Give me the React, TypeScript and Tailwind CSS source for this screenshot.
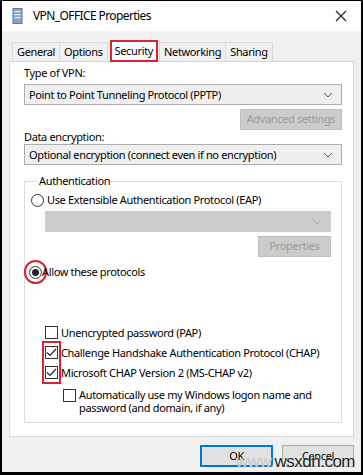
import React from 'react';

function Chevron({ muted = false }: { muted?: boolean }) {
  return (
    <svg width="10" height="6" viewBox="0 0 10 6" className="shrink-0">
      <path d="M1 1 L5 5 L9 1" fill="none" stroke={muted ? '#b0b0b0' : '#555'} strokeWidth="1" />
    </svg>
  );
}

function Select({ label, disabled = false }: { label?: string; disabled?: boolean }) {
  return (
    <div
      className={`flex h-[21px] items-center justify-between border pl-[4px] pr-[8px] ${
        disabled ? 'border-[#cccccc] bg-[#cccccc]' : 'border-[#adadad] bg-[#efefef]'
      }`}
    >
      <span className="whitespace-nowrap leading-[16px]">{label}</span>
      <Chevron muted={disabled} />
    </div>
  );
}

function DisabledButton({ children, width }: { children: React.ReactNode; width: string }) {
  return (
    <div className={`${width} flex h-[21px] items-center justify-center whitespace-nowrap border border-[#bfbfbf] bg-[#cccccc] text-[#9b9b9b]`}>
      {children}
    </div>
  );
}

function Radio({ checked = false }: { checked?: boolean }) {
  return (
    <span className="flex h-[13px] w-[13px] shrink-0 items-center justify-center rounded-full border border-[#333] bg-white">
      {checked ? <span className="h-[7px] w-[7px] rounded-full bg-[#222]" /> : null}
    </span>
  );
}

function Check({ checked = false }: { checked?: boolean }) {
  return (
    <span className="flex h-[13px] w-[13px] shrink-0 items-center justify-center border border-[#333] bg-white">
      {checked ? (
        <svg width="11" height="9" viewBox="0 0 11 9">
          <path d="M1 4.5 L4 7.5 L10 1" fill="none" stroke="#222" strokeWidth="1.2" />
        </svg>
      ) : null}
    </span>
  );
}

const tabs = ['General', 'Options', 'Security', 'Networking', 'Sharing'];

export default function App() {
  return (
    <div
      className="relative flex h-[475px] w-[363px] flex-col overflow-hidden border-x-2 border-b-[3px] border-t border-black bg-[#f0f0f0] text-[11px] tracking-[-0.35px] text-black"
      style={{ fontFamily: '"Noto Sans", "Open Sans", sans-serif' }}
    >
      {/* title bar */}
      <div className="flex h-[30px] items-center bg-white pl-[10px] pr-[10px]">
        <svg width="11" height="16" viewBox="0 0 11 16" className="mr-[10px]">
          <rect x="1" y="0.5" width="9" height="15" fill="#8aa6c4" stroke="#5d7da3" />
          <rect x="2.5" y="3" width="6" height="1.2" fill="#e8eef5" />
          <rect x="2.5" y="6" width="6" height="1.2" fill="#e8eef5" />
          <rect x="2.5" y="9" width="6" height="1.2" fill="#e8eef5" />
        </svg>
        <span className="text-[12px] leading-[18px] tracking-[-0.6px]">VPN_OFFICE Properties</span>
        <svg width="12" height="12" viewBox="0 0 12 12" className="ml-auto mr-[4px]">
          <path d="M1 1 L11 11 M11 1 L1 11" stroke="#222" strokeWidth="1.2" />
        </svg>
      </div>

      {/* tabs */}
      <div className="ml-[10px] mt-[8px] flex h-[22px] items-end">
        {tabs.map((t) =>
          t === 'Security' ? (
            <div
              key={t}
              className="relative z-10 -mb-px ml-[3px] mr-[1px] flex h-[22px] items-center border-2 border-[#d9232e] bg-white px-[3px] leading-[16px]"
            >
              {t}
            </div>
          ) : (
            <div
              key={t}
              className="-mr-px flex h-[19px] items-center border border-b-0 border-[#d9d9d9] bg-[#f0f0f0] px-[4px] leading-[16px]"
            >
              {t}
            </div>
          )
        )}
      </div>

      {/* panel */}
      <div className="mx-[7px] flex h-[376px] flex-col border border-[#d9d9d9] bg-white pl-[14px] pr-[11px] pt-[3px]">
        <div className="leading-[16px]">Type of VPN:</div>
        <div className="mt-[3px]">
          <Select label="Point to Point Tunneling Protocol (PPTP)" />
        </div>
        <div className="mt-[4px] flex justify-end">
          <DisabledButton width="w-[102px]">Advanced settings</DisabledButton>
        </div>
        <div className="leading-[14px]">Data encryption:</div>
        <Select label="Optional encryption (connect even if no encryption)" />

        <fieldset className="mt-[8px] h-[250px] border border-[#dcdcdc] pl-[6px] pr-[10px]">
          <legend className="ml-[7px] px-[1px] leading-[16px]">Authentication</legend>
          <div className="mt-[3px] flex items-center gap-[3px] leading-[16px]">
            <Radio />
            <span className="whitespace-nowrap">Use Extensible Authentication Protocol (EAP)</span>
          </div>
          <div className="ml-[14px] mt-[3px]">
            <Select disabled />
          </div>
          <div className="mt-[4px] flex justify-end">
            <DisabledButton width="w-[73px]">Properties</DisabledButton>
          </div>
          <div className="mt-[3px] flex items-center gap-[3px] leading-[16px]">
            <span className="-ml-[7px] flex h-[24px] w-[23px] items-center justify-center rounded-full border-2 border-[#d9232e]">
              <Radio checked />
            </span>
            <span className="-ml-[8px]">Allow these protocols</span>
          </div>

          <div className="ml-[14px] mt-[42px] flex flex-col gap-[7px]">
            <div className="flex items-center gap-[3px] leading-[13px]">
              <Check />
              <span>Unencrypted password (PAP)</span>
            </div>
            <div className="relative flex flex-col gap-[7px]">
              <span className="absolute -left-[3px] -top-[5px] h-[43px] w-[19px] border-2 border-[#d9232e]" />
              <div className="flex items-center gap-[3px] leading-[13px]">
                <Check checked />
                <span className="whitespace-nowrap">Challenge Handshake Authentication Protocol (CHAP)</span>
              </div>
              <div className="flex items-center gap-[3px] leading-[13px]">
                <Check checked />
                <span className="whitespace-nowrap">Microsoft CHAP Version 2 (MS-CHAP v2)</span>
              </div>
            </div>
            <div className="ml-[18px] mt-[3px] flex items-start gap-[3px] leading-[13px]">
              <Check />
              <span className="-mt-px whitespace-nowrap">
                Automatically use my Windows logon name and
                <br />
                password (and domain, if any)
              </span>
            </div>
          </div>
        </fieldset>
      </div>

      {/* buttons */}
      <div className="mr-[7px] mt-[8px] flex justify-end gap-[9px]">
        <div className="flex h-[22px] w-[73px] items-center justify-center border-2 border-[#0078d7] bg-[#e1e1e1]">OK</div>
        <div className="flex h-[22px] w-[72px] items-center justify-center border border-[#adadad] bg-[#e1e1e1]">Cancel</div>
      </div>

      {/* watermark */}
      <div
        className="pointer-events-none absolute bottom-[1px] right-[6px] text-[17px] leading-[18px] tracking-[-0.5px]"
        style={{ fontFamily: '"Liberation Sans", Arial, sans-serif' }}
      >
        <span className="text-[#c8c8c8]">www.</span>
        <span className="text-[#222] [text-shadow:0_0_2px_#fff]">wsxdn.com</span>
      </div>
    </div>
  );
}
